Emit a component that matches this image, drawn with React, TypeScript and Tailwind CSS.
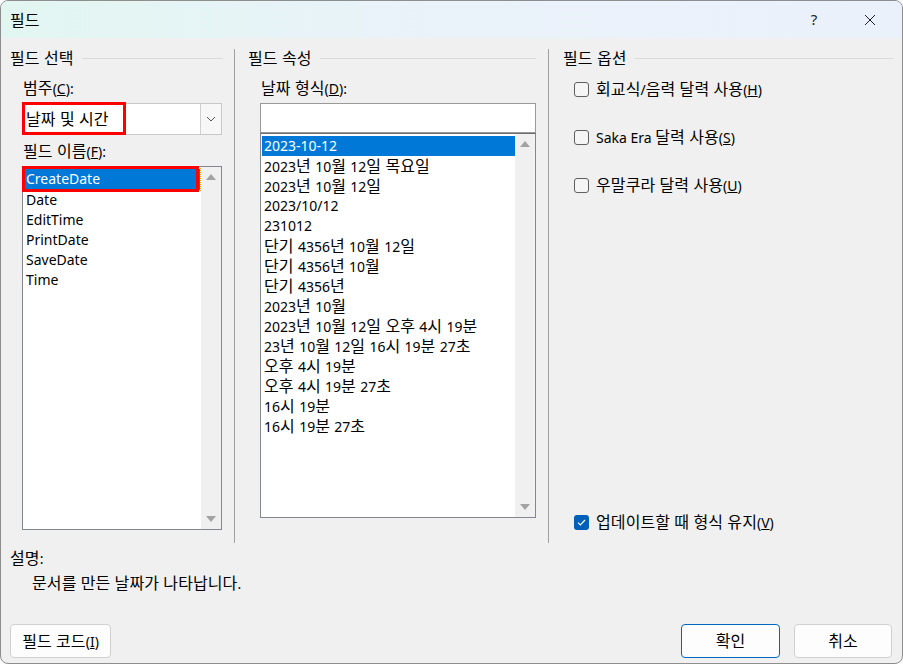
import React from "react";

const FONT = "font-['Noto_Sans','Noto_Sans_CJK_KR',sans-serif]";

// hangul runs are set a little larger so they keep the width of the original dialog font
function k(s: string): React.ReactNode {
  const parts = s.split(/([\uAC00-\uD7A3][\uAC00-\uD7A3 ]*)/);
  return parts.map((p, i) =>
    /[\uAC00-\uD7A3]/.test(p) ? (
      <span key={i} className="text-[16px] tracking-[0.1px]">
        {p}
      </span>
    ) : (
      <React.Fragment key={i}>{p}</React.Fragment>
    )
  );
}

const fieldNames = ["CreateDate", "Date", "EditTime", "PrintDate", "SaveDate", "Time"];

const dateFormats = [
  "2023-10-12",
  "2023년 10월 12일 목요일",
  "2023년 10월 12일",
  "2023/10/12",
  "231012",
  "단기 4356년 10월 12일",
  "단기 4356년 10월",
  "단기 4356년",
  "2023년 10월",
  "2023년 10월 12일 오후 4시 19분",
  "23년 10월 12일 16시 19분 27초",
  "오후 4시 19분",
  "오후 4시 19분 27초",
  "16시 19분",
  "16시 19분 27초",
];

function GroupHeader({ title, lineRight }: { title: string; lineRight: string }) {
  return (
    <div className={`flex items-center h-[20px] ${lineRight}`}>
      <span className="leading-[20px]">{k(title)}</span>
      <div className="flex-1 h-px bg-[#dadada] ml-[8px]" />
    </div>
  );
}

function Scrollbar() {
  return (
    <div className="w-[20px] bg-[#f0f0f0] flex flex-col justify-between items-center py-[6px]">
      <svg width="12" height="8" viewBox="0 0 12 8">
        <path d="M1 7 L6 1 L11 7 Z" fill="#a3a3a3" />
      </svg>
      <svg width="12" height="8" viewBox="0 0 12 8">
        <path d="M1 1 L6 7 L11 1 Z" fill="#a3a3a3" />
      </svg>
    </div>
  );
}

function Checkbox({ label, checked }: { label: React.ReactNode; checked?: boolean }) {
  return (
    <div className="flex items-center h-[20px]">
      {checked ? (
        <div className="w-[15px] h-[15px] rounded-[3px] bg-[#005fb8] flex items-center justify-center">
          <svg width="9" height="7" viewBox="0 0 9 7">
            <path d="M1 3.6 L3.4 6 L8 1" stroke="white" strokeWidth="1.2" fill="none" />
          </svg>
        </div>
      ) : (
        <div className="w-[15px] h-[15px] rounded-[3px] border border-[#5f5f5f] bg-[#f5f5f5]" />
      )}
      <span className="ml-[7px] leading-[20px]">{label}</span>
    </div>
  );
}

export default function App() {
  return (
    <div className={`w-[903px] h-[664px] bg-[#fafafa] ${FONT} text-[14px] text-black`}>
      <div className="w-full h-full rounded-[8px] border border-[#8e8e8e] overflow-hidden bg-[#f0f0f0] flex flex-col">
        {/* title bar */}
        <div className="h-[37px] shrink-0 flex items-center bg-gradient-to-r from-[#e2f6f1] via-[#eaf2fa] to-[#ebf1fb]">
          <span className="ml-[9px] flex-1">{k("필드")}</span>
          <span className="w-[20px] mr-[17px] text-center text-[15px] text-[#222]">?</span>
          <div className="w-[57px] flex justify-center mr-[4px]">
            <svg width="12" height="12" viewBox="0 0 12 12">
              <path d="M1 1 L11 11 M11 1 L1 11" stroke="#222" strokeWidth="1" />
            </svg>
          </div>
        </div>

        {/* columns */}
        <div className="flex h-[505px] shrink-0">
          {/* column 1 */}
          <div className="w-[233px] pl-[9px] pt-[10px]">
            <GroupHeader title="필드 선택" lineRight="mr-[11px]" />
            <div className="h-[20px] mt-[10px] pl-[13px] leading-[20px]">
              {k("범주")}(<u>C</u>):
            </div>
            <div className="mt-[5px] ml-[12px] w-[200px] h-[32px] bg-white border border-[#c8c8c8] flex relative">
              <div className="absolute left-[-1px] top-[-2px] w-[104px] h-[33px] border-[3px] border-[#ff0000]" />
              <div className="flex-1 flex items-center pl-[3px]">{k("날짜 및 시간")}</div>
              <div className="w-[21px] bg-[#f7f7f7] border-l border-[#d0d0d0] flex items-center justify-center">
                <svg width="10" height="6" viewBox="0 0 10 6">
                  <path d="M1 1 L5 5 L9 1" stroke="#555" strokeWidth="1" fill="none" />
                </svg>
              </div>
            </div>
            <div className="h-[20px] mt-[6px] pl-[13px] leading-[20px]">
              {k("필드 이름")}(<u>F</u>):
            </div>
            <div className="mt-[5px] ml-[12px] w-[200px] h-[364px] bg-white border border-[#828790] flex">
              <div className="flex-1 pt-[1px] relative">
                <div className="absolute left-[-1px] top-[-1px] w-[177px] h-[26px] border-[3px] border-[#ff0000]" />
                {fieldNames.map((n, i) => (
                  <div
                    key={n}
                    className={`h-[20px] leading-[20px] pl-[2px] mx-[1px] ${i === 0 ? "bg-[#0078d7] text-white mt-[1px] h-[21px] outline-1 outline-dotted outline-[#f0b000]" : ""}`}
                  >
                    {n}
                  </div>
                ))}
              </div>
              <Scrollbar />
            </div>
          </div>
          <div className="w-px mt-[11px] h-[494px] bg-[#a0a0a0]" />

          {/* column 2 */}
          <div className="w-[313px] pl-[13px] pt-[10px]">
            <GroupHeader title="필드 속성" lineRight="mr-[12px]" />
            <div className="h-[20px] mt-[10px] pl-[13px] leading-[20px]">
              {k("날짜 형식")}(<u>D</u>):
            </div>
            <div className="mt-[5px] ml-[12px] w-[276px] h-[30px] bg-white border border-[#999]" />
            <div className="ml-[12px] w-[276px] h-[385px] bg-white border border-[#828790] border-t-[#6e6e6e] flex">
              <div className="flex-1 pt-[2px]">
                {dateFormats.map((d, i) => (
                  <div
                    key={d}
                    className={`h-[20px] leading-[20px] pl-[2px] ml-[1px] whitespace-nowrap ${i === 0 ? "bg-[#0078d7] text-white" : ""}`}
                  >
                    {k(d)}
                  </div>
                ))}
              </div>
              <Scrollbar />
            </div>
          </div>
          <div className="w-px mt-[11px] h-[494px] bg-[#a0a0a0]" />

          {/* column 3 */}
          <div className="flex-1 pl-[14px] pt-[10px] flex flex-col">
            <GroupHeader title="필드 옵션" lineRight="mr-[9px]" />
            <div className="pl-[11px] mt-[11px] flex flex-col gap-[28px]">
              <Checkbox label={<>{k("회교식/음력 달력 사용")}(<u>H</u>)</>} />
              <Checkbox label={<>Saka Era {k("달력 사용")}(<u>S</u>)</>} />
              <Checkbox label={<>{k("우말쿠라 달력 사용")}(<u>U</u>)</>} />
            </div>
            <div className="pl-[11px] mt-[317px]">
              <Checkbox checked label={<>{k("업데이트할 때 형식 유지")}(<u>V</u>)</>} />
            </div>
          </div>
        </div>

        {/* description */}
        <div className="pl-[9px] mt-[5px] h-[20px] leading-[20px]">{k("설명")}:</div>
        <div className="pl-[31px] mt-[5px] h-[20px] leading-[20px]">{k("문서를 만든 날짜가 나타납니다")}.</div>

        {/* buttons */}
        <div className="flex items-center mt-[31px] px-[9px]">
          <button className="w-[101px] h-[34px] rounded-[4px] bg-[#fdfdfd] border border-[#d0d0d0]">
            {k("필드 코드")}(<u>I</u>)
          </button>
          <div className="flex-1" />
          <button className="w-[99px] h-[34px] rounded-[4px] bg-[#fdfdfd] border border-[#0067c0]">{k("확인")}</button>
          <button className="w-[98px] h-[34px] ml-[14px] mr-[1px] rounded-[4px] bg-[#fdfdfd] border border-[#d0d0d0]">
            {k("취소")}
          </button>
        </div>
      </div>
    </div>
  );
}
